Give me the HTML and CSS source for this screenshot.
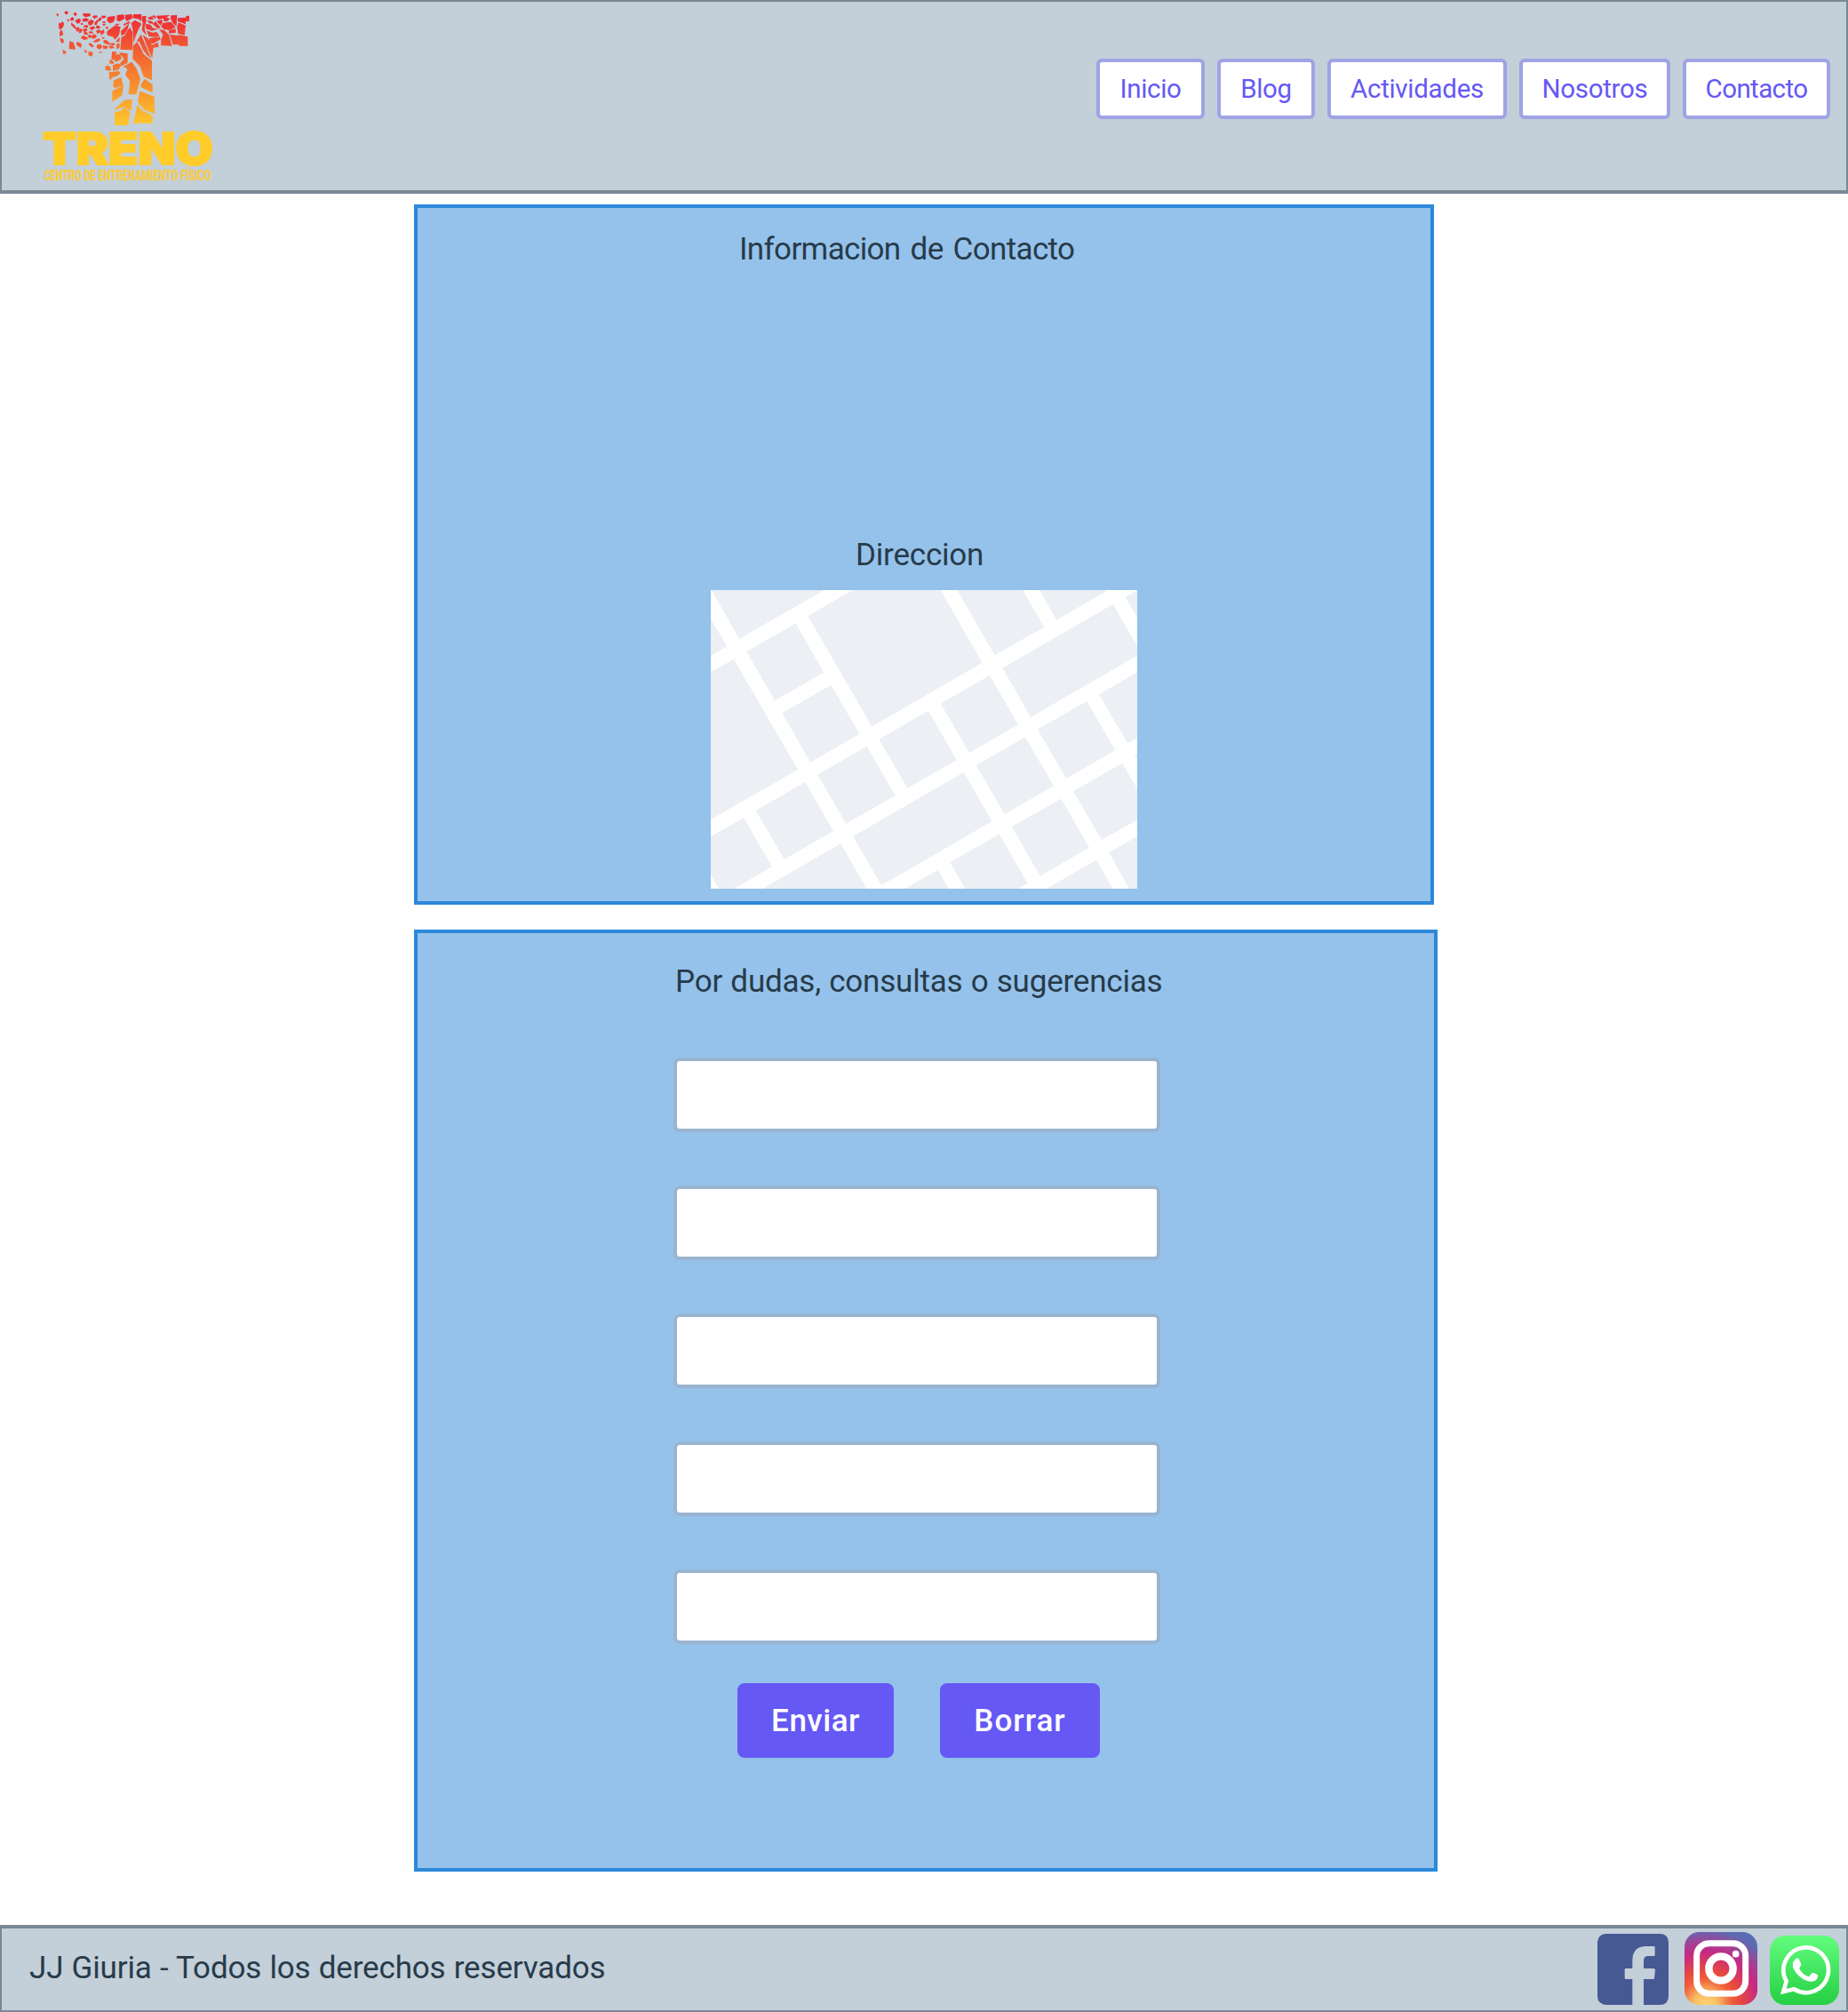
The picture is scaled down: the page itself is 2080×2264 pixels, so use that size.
FILE: index.html
```html
<!DOCTYPE html>
<html lang="es">
<head>
<meta charset="utf-8">
<title>Treno - Contacto</title>
<link rel="stylesheet" href="styles.css">
</head>
<body>
<header class="header">
  <svg class="logo" viewBox="135 24 600 600" role="img" aria-label="Treno">
    <defs>
      <linearGradient id="fire" gradientUnits="userSpaceOnUse" x1="0" y1="15" x2="0" y2="400">
        <stop offset="0" stop-color="#ee2a34"/>
        <stop offset=".1" stop-color="#ef3535"/>
        <stop offset=".5" stop-color="#f5772f"/>
        <stop offset="1" stop-color="#fec82b"/>
      </linearGradient>
    </defs>
    <g transform="translate(174 24)">
      <g fill="url(#fire)">
        <!-- flying splinters -->
        <path d="M16 21l7 2 0 9-5-3zM44 16l7-3 6 5-5 7-7-2zM24 53l8 2 2-7 8 6-1 10-8 11-8-1zM27 86l4-9 5 2 4 14-10 6-3-5zM28 103l12 6 2 9-6 5-5-6zM38 143l12 8-3 7-9-1zM61 115l13 4 7 20-3 4-19-2zM52 41l6 0 2 6-5 2zM63 39l7-6 6 5-2 8-10 0zM66 52l13 10 7 14-8-3-12-13zM73 22l9-5 4 8-6 6zM79 46l13-8 7 4-3 11-9 3zM84 70l8-3 3 7-9 10-3-4zM91 78l8-6 6 5-5 9-7 2zM85 117l13 4 5 8-5 8-12-7-2-8zM98 103l9-7 14 6 2 6-14 3zM106 21l25 1 0 8-16 4-8-5zM103 42l13-6 11 6-7 7-14 0zM99 55l6-3 1 8-6 0zM122 51l12-10 10 7-7 11-10 4zM109 62l12-2 3 9-15 0zM105 74l14-3 2 8-11 7zM127 69l16-5 4 7-12 8zM125 83l12-2 4 9-15-2zM109 84l11 1 4 8-14 0zM121 95l11-2 8 8-13 4zM138 30l14-3 4 7-13 6zM145 53l9-10 5 2-7 15-6 1zM157 42l8-9 5 8-11 8zM136 99l6-8 9 3 1 9-14 5zM150 80l10-5 8 7-13 9zM153 61l13 6-5 6-13-2zM151 109l10-3 5 5-14 8-13-1zM109 142l12 7-6 7zM125 150l13 1 2 9-6 7-10-5zM124 124l8-3 12 12-9 3zM154 127l12-2 6 9-9 9-11-6zM174 128l18 5-6 9-12-2zM159 150l14 2-8 4zM169 29l16 0-4 8-11 1zM171 57l14-1-8 8zM174 48l10 1-5 5-8-1zM164 84l12-9 3 11-12 9zM168 100l13 4-7 4zM175 112l10-1 17 15-12 1-14-6zM193 132l12-3 8 9-16 2zM198 122l14-1 3 7-11 1zM181 200l10-3 6 4 5 11-6 3-14-3z"/>
        <!-- left arm -->
        <path d="M189 33l25-3 1 7-6 14-12 4-10-9zM221 27l23-2 3 13-17 11-10-3zM248 26l20-2 5 2-1 12-19 10-4-8zM277 24h27v23l-13-7-18-3zM189 80l25-18 19 4-5 28-13 16-9-10-16-4-4-8zM182 69l5-4 5 3-4 7zM218 56l12 0-6 6-11-1zM219 126l11-5-1 17-9 4zM216 119l9-13 6-4-2 14zM234 81l28-26-5 20-10 17-12 4zM236 101l12-5 7-15 10-13 9 18v59l-42-2zM242 58l21-10 3 5-22 9z"/>
        <!-- right arm -->
        <path d="M269 54l13-10 22 12-10 18-10 24-7 24-3-48zM308 55l9-23 3 14-6 26 7 25-16-19zM306 31l15-1-7 22-8-2zM325 35l15-4 4 12-16-2zM340 30l7-3 7 9-7 2zM353 29l47-2-14 9-25 6zM322 44l18 4 4 9-14-2zM319 56l15 3 7 11 18 4-20 6-21-7zM341 57l10-9 18 22-10 3zM354 47l19-5 2 9-7 11zM378 36l8-4 14 8-10 9-11-2zM403 28l21-1-2 38-13-12-7-15zM426 37l27-2v23l-27-10zM454 30l11-1v18l-12 2zM370 65l6-12 28-3 15 18-20 10-20-3zM428 52l25 10-4 33-22-6-3-20zM321 79l20 7 14-2 10 13-15 4-22-2zM330 105l36-5 2 9-23 14-16-1zM363 75l18 3 12 12-12 8zM369 130l1-20 11-29 15 11 11 39zM396 79l23-6 1 13-24 3zM399 93l24 2 11 6 0 26-24 0zM427 93l33 7v32l-29-1z"/>
        <!-- stem -->
        <path d="M276 130l13-12 11 18 11 23 28 22v66l-28-12-12-35-25-25zM287 116l15-24 35 82-15-12-13-17-13-29zM308 94l18 12 13 22 20-9 3 15-18 3-4 36-14-31zM204 151l16-1-3 10 15 0 5 15-19 10-9-9-7 4zM228 153l29 4 0 31-21 11-5-9 14-15-12-14zM196 178l13 4 2 9-15 0zM207 196l16-6 13 5-9 16-20 5zM194 220l14-1 18-4 7 8-13 10-14 4-10 12zM240 202l31-17 15 21 14 35-14 54-26-1 5-44-16-21 7-18-7-8zM210 247l25-10 7 28-26 9-8-5zM205 283l38-18-5 33-33 22zM303 259l12-17 26 20v27l-40-19zM298 283l49 19 1 58-34-13-23-26zM214 343l33-29 25-3-3 37-15-3-12-10-18 10-8 0zM213 353l20-1 10-12 22 13-6 46h-46zM290 329l14 19 37 19v25h-65z"/>
      </g>
    </g>
    <text class="logo-name" x="145" y="555" textLength="574" lengthAdjust="spacingAndGlyphs">TRENO</text>
    <text class="logo-tag" x="149" y="610" textLength="563" lengthAdjust="spacingAndGlyphs">CENTRO DE ENTRENAMIENTO FÍSICO</text>
  </svg>
  <nav class="nav">
    <a class="nav-link inicio">Inicio</a>
    <a class="nav-link blog">Blog</a>
    <a class="nav-link actividades">Actividades</a>
    <a class="nav-link nosotros">Nosotros</a>
    <a class="nav-link contacto">Contacto</a>
  </nav>
</header>

<main class="main">
  <section class="card info">
    <h1 class="title info-title">Informacion de Contacto</h1>
    <h2 class="title address-title">Direccion</h2>
    <svg class="map" viewBox="60 252 1440 1008" role="img" aria-label="Mapa">
      <path fill="#fff" d="M60 252h1440v1008H60z"/>
      <path fill="#ecf0f5" d="M62 252H444L156 417zM60 348L115 442 60 473zM60 528L138 485 354 858 60 1027zM180 460L347 364 442 530 276 625zM388 340L539 252H836L977 497 604 713zM892 252H1114L1186 377 1019 472zM1170 252H1392V259L1227 353zM1460 275L1500 253V346zM1045 515L1418 299 1500 441V473L1140 682zM301 667L467 572 562 738 396 833zM420 875L587 779 683 946 517 1041zM628 755L795 659 890 826 724 921zM836 635L1002 540 1098 706 933 802zM1163 722L1330 627 1426 793 1260 888zM1371 604L1500 529V751L1467 769zM956 843L1122 748 1218 913 1052 1009zM1491 810L1500 806V826zM1284 931L1450 836 1500 922V1028L1380 1096zM540 1083L914 867 1010 1033 636 1249zM212 996L379 900 474 1066 308 1161zM60 1084L171 1020 267 1186 139 1260H88L60 1212zM235 1260L499 1108 587 1260zM715 1260L827 1196 864 1260zM867 1171L1034 1076 1130 1241 1098 1260H919zM1076 1051L1243 956 1338 1121 1172 1217zM1194 1260L1362 1163 1418 1260zM1404 1138L1500 1083V1260H1473z"/>
    </svg>
  </section>

  <section class="card contact">
    <h2 class="title contact-title">Por dudas, consultas o sugerencias</h2>
    <form class="form">
      <input class="field" type="text">
      <input class="field" type="text">
      <input class="field" type="text">
      <input class="field" type="text">
      <input class="field" type="text">
      <div class="actions">
        <button class="button send" type="button">Enviar</button>
        <button class="button clear" type="button">Borrar</button>
      </div>
    </form>
  </section>
</main>

<footer class="footer">
  <p class="copyright">JJ Giuria - Todos los derechos reservados</p>
  <div class="social">
    <svg class="facebook" viewBox="54 78 240 240" role="img" aria-label="Facebook">
      <path fill="#475993" d="M82 78H266Q294 80 294 106V290Q292 318 264 318H210V231H243Q246 231 246 228L249 200Q249 195 244 195H210V169Q210 153 226 153H244Q248 153 248 149V124Q248 120 244 120H220Q172 120 172 168V195H150Q146 195 146 199V227Q146 231 150 231H172V318H84Q56 316 54 290V106Q56 80 82 78z"/>
    </svg>
    <svg class="instagram" viewBox="348 72 246 246" role="img" aria-label="Instagram">
      <defs>
        <radialGradient id="ig-warm" gradientUnits="userSpaceOnUse" cx="420" cy="318" r="255">
          <stop offset="0" stop-color="#fdd576"/>
          <stop offset=".16" stop-color="#f9bd62"/>
          <stop offset=".34" stop-color="#f0603c"/>
          <stop offset=".46" stop-color="#e8483f"/>
          <stop offset=".7" stop-color="#c42a84"/>
          <stop offset=".82" stop-color="#a83e92"/>
          <stop offset="1" stop-color="#5b6bb3"/>
        </radialGradient>
      </defs>
      <rect x="348" y="72" width="246" height="246" rx="50" fill="url(#ig-warm)"/>
      <rect x="389" y="110" width="165" height="170" rx="42" fill="none" stroke="#fff" stroke-width="21"/>
      <circle cx="471" cy="195" r="41" fill="none" stroke="#fff" stroke-width="25"/>
      <circle cx="521" cy="146" r="11.500" fill="#fff"/>
    </svg>
    <svg class="whatsapp" viewBox="636 84 234 234" role="img" aria-label="WhatsApp">
      <defs>
        <linearGradient id="wa" x1="0" y1="0" x2="0" y2="1">
          <stop offset="0" stop-color="#61fd7d"/>
          <stop offset="1" stop-color="#25cf43"/>
        </linearGradient>
      </defs>
      <rect x="636" y="84" width="234" height="234" rx="52" fill="url(#wa)"/>
      <path fill="none" stroke="#fff" stroke-width="14" d="M682 273L692 238A76 76 0 1 1 718 265z"/>
      <path fill="#fff" d="M722 163Q727 159 734 162L742 180Q743 184 735 194Q745 215 768 223L778 211Q781 208 785 210L798 217Q800 230 787 237Q776 242 760 236Q731 225 715 194Q710 176 722 163z"/>
    </svg>
  </div>
</footer>
</body>
</html>
```
FILE: styles.css
```css
* {
  box-sizing: border-box;
}

body {
  margin: 0;
  min-height: 2264px;
  display: flex;
  flex-direction: column;
  background: #fff;
  color: #273b4a;
  font-family: Roboto, "Liberation Sans", sans-serif;
}

.header {
  display: flex;
  justify-content: space-between;
  align-items: flex-start;
  height: 218px;
  padding: 6px 18px 0 43px;
  background: #c3cfd9;
  border: 2px solid #788896;
  border-bottom-width: 4px;
}

.logo {
  display: block;
  width: 200px;
  height: 200px;
}

.logo-name {
  fill: #ffcc2a;
  font-family: Inter, sans-serif;
  font-size: 148px;
  font-weight: 900;
  stroke: #ffcc2a;
  stroke-width: 6px;
}

.logo-tag {
  fill: #fbcb3c;
  font-size: 50px;
  font-weight: 900;
}

.nav {
  display: flex;
  gap: 14px;
  padding-top: 58px;
}

.nav-link {
  height: 68px;
  background: #fff;
  border: 4px solid #a0a3e4;
  border-radius: 6px;
  color: #6558f5;
  font-size: 29.5px;
  font-weight: 400;
  line-height: 60px;
  text-align: center;
  letter-spacing: -0.3px;
}

.inicio { width: 122px; }
.blog { width: 110px; }
.actividades { width: 202px; }
.nosotros { width: 170px; }
.contacto { width: 166px; letter-spacing: -0.6px; }

.main {
  display: flex;
  flex-direction: column;
  gap: 28px;
  padding: 12px 0 0 466px;
}

.card {
  display: flex;
  flex-direction: column;
  background: #95c2eb;
  border: 4px solid #2c88d9;
}

.title {
  margin: 0;
  font-size: 35px;
  font-weight: 400;
  line-height: 40px;
  white-space: nowrap;
}

.info {
  width: 1148px;
  height: 788px;
  padding: 27px 0 0 330px;
}

.info-title {
  padding-left: 32px;
  letter-spacing: -0.65px;
  word-spacing: 3px;
}

.address-title {
  margin-top: 304px;
  padding-left: 163px;
  letter-spacing: -0.2px;
}

.map {
  display: block;
  width: 480px;
  height: 336px;
  margin-top: 19px;
}

.contact {
  width: 1152px;
  height: 1060px;
  padding: 35px 0 0 288px;
}

.contact-title {
  padding-left: 2px;
  letter-spacing: -0.2px;
  word-spacing: 0.8px;
}

.form {
  display: flex;
  flex-direction: column;
  gap: 60px;
  width: 548px;
  margin-top: 65px;
}

.field {
  width: 548px;
  height: 84px;
  padding: 0 20px;
  background: #fff;
  border: 4px solid #9ab4d0;
  border-radius: 7px;
  font: inherit;
  font-size: 35px;
}

.actions {
  display: flex;
  gap: 52px;
  margin-top: -16px;
  padding-left: 72px;
}

.button {
  height: 84px;
  padding: 0;
  background: #6558f5;
  border: 0;
  border-radius: 8px;
  color: #fff;
  font-family: inherit;
  font-size: 35px;
  font-weight: 500;
}

.send {
  width: 176px;
  letter-spacing: 0.5px;
}

.clear {
  width: 180px;
  letter-spacing: 1px;
}

.footer {
  display: flex;
  justify-content: space-between;
  height: 98px;
  margin-top: 60px;
  padding: 0 8px 0 31px;
  background: #c3cfd9;
  border: 2px solid #788896;
  border-top-width: 4px;
}

.copyright {
  margin: 0;
  padding-top: 25px;
  font-size: 35px;
  line-height: 40px;
  letter-spacing: -0.17px;
  word-spacing: 0.8px;
}

.social {
  display: flex;
  align-items: flex-end;
  padding-bottom: 6px;
}

.facebook {
  width: 80px;
  height: 80px;
  margin-right: 18px;
}

.instagram {
  width: 82px;
  height: 82px;
  margin-right: 14px;
}

.whatsapp {
  width: 78px;
  height: 78px;
}
```
